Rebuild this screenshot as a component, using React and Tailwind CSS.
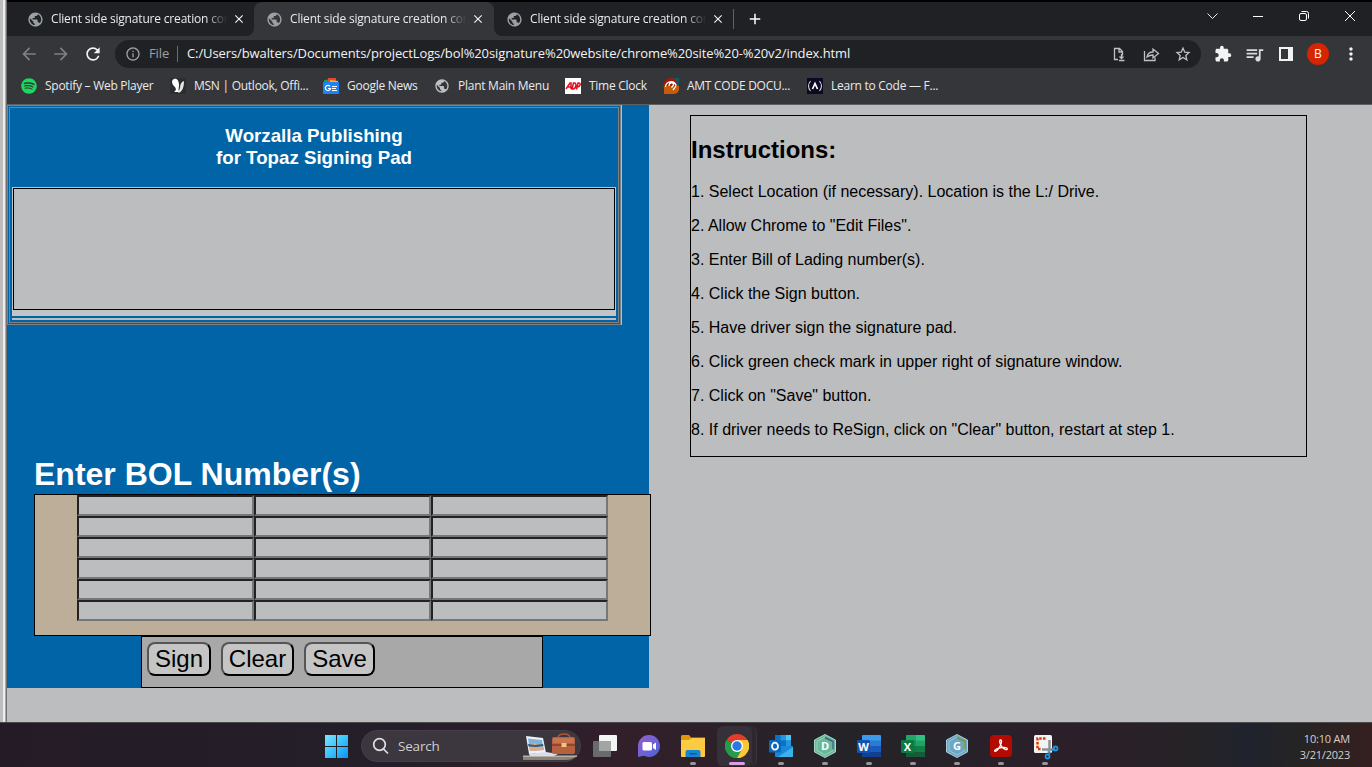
import React from "react";
import {
  MdPublic, MdArrowBack, MdArrowForward, MdRefresh, MdInfoOutline, MdExtension,
  MdQueueMusic, MdStarBorder, MdMoreVert, MdClose, MdAdd,
} from "react-icons/md";
import { FaSpotify } from "react-icons/fa";

const UI = "font-['Open_Sans',sans-serif]";

function Tab() {
  return (
    <div className="flex h-[34px] w-[239px] shrink-0 items-center pl-[12px]">
      <MdPublic size={17} color="#9aa0a6" />
      <div className="ml-[7px] w-[176px] overflow-hidden whitespace-nowrap text-[12px] tracking-[-0.18px] text-[#e8eaed] [mask-image:linear-gradient(to_right,black_88%,transparent)]">
        Client side signature creation control
      </div>
      <MdClose size={14} color="#f1f3f4" className="ml-[5px]" />
    </div>
  );
}

function WindowControls() {
  return (
    <svg width="166" height="34" viewBox="1206 2 166 34" fill="none" stroke="#e8eaed" strokeWidth="1" className="ml-auto">
      <path d="M1207.500 13.500l5 5 5-5" />
      <path d="M1253 16.500h10" stroke="#fff" />
      <rect x="1299.500" y="13.500" width="7" height="7" rx="1.500" stroke="#fff" />
      <path d="M1301.500 11.500h5a2 2 0 0 1 2 2v5" stroke="#fff" />
      <path d="M1345 11l10 10M1355 11l-10 10" stroke="#fff" />
    </svg>
  );
}

function MsnIcon() {
  return (
    <svg width="16" height="16" viewBox="0 0 16 16">
      <rect width="16" height="16" fill="#2b2d30" />
      <path d="M4 1c3-1 5 2 5 6 0 3-1 4 0 7H4c3-2 2-4 0-6S1 2 4 1z" fill="#fff" />
      <path d="M14 3c-3 1-4 4-4 7l-2 5c4-1 6-5 6-12z" fill="#e5e5e5" />
    </svg>
  );
}

function NewsIcon() {
  return (
    <svg width="16" height="16" viewBox="0 0 16 16">
      <path d="M1 2l9-1v5H1z" fill="#0f9d58" />
      <path d="M5 0h8v5H5z" fill="#ea4335" />
      <path d="M7 2l8 1v4H7z" fill="#fbbc04" />
      <rect y="4" width="16" height="12" rx="1" fill="#1a83f7" />
      <path d="M7 8.300A2.600 2.600 0 1 0 7.500 10.500H5M9 8.500h5M9 10.500h4M9 12.500h5" stroke="#fff" strokeWidth="1.200" fill="none" />
    </svg>
  );
}

function AdpIcon() {
  return (
    <svg width="16" height="16" viewBox="0 0 16 16">
      <rect width="16" height="16" fill="#fff" />
      <path d="M1 11L5 5h1v6M3 9h3M7 11l1.500-6h1C12 5 11 11 8 11zM11.500 11.500L13 5h1c2 0 1.500 4-2 4" fill="none" stroke="#e11020" strokeWidth="1.500" />
    </svg>
  );
}

function AmtIcon() {
  return (
    <svg width="16" height="16" viewBox="0 0 16 16">
      <path d="M8 0h8v9H8z" fill="#0e5a6b" />
      <path d="M0 8a8 8 0 0 1 8-8c3 0 6 2 6 6l-6 3-8 1z" fill="#9b1c0c" />
      <path d="M1 8h15v3a5 5 0 0 1-5 5H1z" fill="#c75c08" />
      <path d="M2.500 9A5.500 5.500 0 0 1 13 7c0 2-1.500 3-3 5M6 8c0-4 5-4 4.500-1L8.500 9.500" stroke="#fff" strokeWidth="1.300" fill="none" />
    </svg>
  );
}

function FccIcon() {
  return (
    <svg width="16" height="16" viewBox="0 0 16 16">
      <rect width="16" height="16" fill="#0a0a23" />
      <path d="M3.500 3Q-.5 8 3.500 13M12.500 3q4 5 0 10" stroke="#d0d0d8" fill="none" strokeWidth="1.100" />
      <path d="M5.500 11L8 5.500 10.500 11" stroke="#fff" fill="none" strokeWidth="1.700" />
    </svg>
  );
}

const bookmarks = [
  { w: "w-[149px]", icon: <FaSpotify size={16} color="#1ed760" />, text: "Spotify – Web Player", t: "tracking-[-0.26px]" },
  { w: "w-[153px]", icon: <MsnIcon />, text: "MSN | Outlook, Offi...", t: "tracking-[-0.26px]" },
  { w: "w-[111px]", icon: <NewsIcon />, text: "Google News", t: "tracking-[-0.26px]" },
  { w: "w-[131px]", icon: <MdPublic size={16} color="#bdc1c6" />, text: "Plant Main Menu", t: "tracking-[-0.26px]" },
  { w: "w-[98px]", icon: <AdpIcon />, text: "Time Clock", t: "tracking-[-0.26px]" },
  { w: "w-[144px]", icon: <AmtIcon />, text: "AMT CODE DOCU...", t: "tracking-[-0.26px]" },
  { w: "w-[140px]", icon: <FccIcon />, text: "Learn to Code — F...", t: "tracking-[-0.26px]" },
];

function Browser() {
  return (
    <header className={`${UI} h-[105px] border-b border-[#5f6063] border-t-[2px] border-t-black bg-[#35363a]`}>
      <div className="flex h-[34px]">
        <div className="w-[247px] rounded-br-lg bg-[#202124] pl-2"><Tab /></div>
        <div className="bg-[#202124]"><div className="w-[240px] rounded-t-lg bg-[#35363a]"><Tab /></div></div>
        <div className="flex flex-1 items-center rounded-bl-lg bg-[#202124]">
          <Tab />
          <div className="h-[20px] w-px bg-[#5f6368]" />
          <MdAdd size={18} color="#fff" className="ml-[12px]" />
          <WindowControls />
        </div>
      </div>
      <div className="flex h-[36px] items-center pl-[12px]">
        <MdArrowBack size={20} color="#7d8084" />
        <MdArrowForward size={20} color="#7d8084" className="ml-[12px]" />
        <MdRefresh size={20} color="#f1f3f4" className="ml-[12px]" />
        <div className="ml-[12px] flex h-[28px] w-[1086px] items-center rounded-full bg-[#202124] pl-[10px]">
          <MdInfoOutline size={16} color="#9aa0a6" />
          <span className="ml-[8px] w-[28px] text-[13px] tracking-[-0.1px] text-[#9aa0a6]">File</span>
          <div className="h-[16px] w-px bg-[#6b6e73]" />
          <span className="ml-[9px] whitespace-nowrap text-[13px] tracking-[-0.1px] text-[#f1f3f4]">
            C:/Users/bwalters/Documents/projectLogs/bol%20signature%20website/chrome%20site%20-%20v2/index.html
          </span>
          <svg width="80" height="20" viewBox="1112 44 80 20" fill="none" stroke="#bdc1c6" strokeWidth="1.300" className="ml-auto mr-[9px]">
            <path d="M1118 59.500h-3.500v-11h5l3 3v4M1119 48.500v3.500h3.500" />
            <path d="M1121.500 54v4M1119.500 56.500l2 2 2-2M1119 60.500h5.500" />
            <path d="M1144.500 51v9.500h10.500v-3" />
            <path d="M1147 57c.5-3.500 2.500-5 6-5v-3l5.500 4.500-5.500 4.500v-3c-2.500 0-4 .5-6 2z" />
            <path d="M1183 48.200l1.800 4 4.200.4-3.200 2.900 1 4.300-3.800-2.300-3.800 2.300 1-4.300-3.200-2.900 4.200-.4z" />
          </svg>
        </div>
        <MdExtension size={18} color="#f1f3f4" className="ml-[13px]" />
        <MdQueueMusic size={21} color="#dadce0" className="ml-[12px]" />
        <svg width="14" height="14" viewBox="0 0 14 14" className="ml-[14px]">
          <path d="M0 0h14v14H0zM2 2v10h7V2z" fill="#f1f3f4" fillRule="evenodd" />
        </svg>
        <div className="ml-[14px] flex size-[22px] items-center justify-center rounded-full bg-[#d62500] text-[12px] text-white">B</div>
        <MdMoreVert size={20} color="#f1f3f4" className="ml-[12px]" />
      </div>
      <div className="flex h-[28px] items-center pl-[14px]">
        {bookmarks.map((b) => (
          <div key={b.text} className={`flex shrink-0 items-center gap-2 whitespace-nowrap text-[12px] text-[#e8eaed] ${b.w} ${b.t}`}>
            {b.icon}
            <span>{b.text}</span>
          </div>
        ))}
      </div>
    </header>
  );
}

const steps = [
  "1. Select Location (if necessary). Location is the L:/ Drive.",
  '2. Allow Chrome to "Edit Files".',
  "3. Enter Bill of Lading number(s).",
  "4. Click the Sign button.",
  "5. Have driver sign the signature pad.",
  "6. Click green check mark in upper right of signature window.",
  '7. Click on "Save" button.',
  '8. If driver needs to ReSign, click on "Clear" button, restart at step 1.',
];

function Page() {
  return (
    <main className="flex h-[617px] bg-[#bcbdbf] font-['Liberation_Sans',Arial,sans-serif] text-black">
      <section className="h-[583px] w-[642px] shrink-0 bg-[#0064a6]">
        <div className="w-[615px] border-r border-[#bcbdbf]">
          <div className="h-[220px] border-[3px] border-double border-[#808080] px-[2px]">
            <h3 className="h-[79px] pt-[17px] text-center text-[18.72px] font-bold leading-[22px] text-white">
              Worzalla Publishing<br />for Topaz Signing Pad
            </h3>
            <div className="h-[129px] bg-[#c3c4c6] p-px">
              <div className="h-[122px] border border-black bg-[#bcbdbf]" />
            </div>
            <div className="mt-[2px] h-[2px] bg-[#bcbdbf]" />
          </div>
        </div>
        <h1 className="ml-[27px] mt-[131px] h-[38px] text-[32px] font-bold leading-[37px] text-white">Enter BOL Number(s)</h1>
        <div className="ml-[27px] h-[142px] w-[617px] border border-black bg-[#bdae99] pl-[42px]">
          <div className="grid w-[531px] grid-cols-3">
            {Array.from({ length: 18 }, (_, i) => (
              <input key={i} className="h-[21px] w-full border-2 border-b-[#767779] border-l-[#222] border-r-[#767779] border-t-[#222] bg-[#bcbdbf]" />
            ))}
          </div>
        </div>
        <div className="ml-[134px] flex h-[52px] w-[402px] gap-[10px] border border-black bg-[#a8a8a8] pl-[5px] pt-[5px]">
          <button className="h-[34px] w-[64px] rounded-lg border-2 border-b-black border-l-[#555] border-r-black border-t-[#555] bg-[#c5c5c5] text-[24px] leading-[30px]">Sign</button>
          <button className="h-[34px] w-[73px] rounded-lg border-2 border-b-black border-l-[#555] border-r-black border-t-[#555] bg-[#c5c5c5] text-[24px] leading-[30px]">Clear</button>
          <button className="h-[34px] w-[71px] rounded-lg border-2 border-b-black border-l-[#555] border-r-black border-t-[#555] bg-[#c5c5c5] text-[24px] leading-[30px]">Save</button>
        </div>
      </section>
      <section className="ml-[41px] mt-[10px] h-[342px] w-[617px] border border-black">
        <h2 className="mt-[20px] text-[24px] font-bold leading-[28px]">Instructions:</h2>
        <div className="mt-[19px] flex flex-col gap-4">
          {steps.map((s) => <p key={s} className="text-[16px] leading-[18px]">{s}</p>)}
        </div>
      </section>
    </main>
  );
}

function TaskItem({ children, dot = true, active = false }) {
  return (
    <div className="flex h-[44px] w-[44px] shrink-0 flex-col items-center">
      <div className={active ? "flex h-[40px] w-[40px] items-center justify-center rounded-md border-r border-[#3a353c] bg-[#363138] shadow-[inset_-4px_0_0_#2d282f]" : "flex h-[40px] w-[40px] items-center justify-center"}>
        {children}
      </div>
      {dot && <div className={active ? "-mt-[4px] h-[3px] w-[16px] rounded-full bg-[#d8a0e0]" : "-mt-[4px] h-[3px] w-[6px] rounded-full bg-[#98949a]"} />}
    </div>
  );
}

function OfficeIcon({ c, letter }) {
  return (
    <svg width="24" height="22" viewBox="0 0 24 22">
      <rect x="5" width="19" height="22" rx="1" fill={c[0]} />
      <path d="M5 5.500h19V11H5z" fill={c[1]} />
      <path d="M5 11h19v5.500H5z" fill={c[2]} />
      <path d="M5 16.500h19V21q0 1-1 1H6q-1 0-1-1z" fill={c[3]} />
      {letter === "X" && <path d="M5 1q0-1 1-1h9v16.500H5z" fill="#0b7040" opacity=".35" />}
      <rect y="5" width="13" height="13" rx="1" fill={c[4]} />
      <text x="6.500" y="15.500" textAnchor="middle" fontFamily="Open Sans" fontWeight="700" fontSize="11" fill="#fff">{letter}</text>
    </svg>
  );
}

function HexIcon({ base, light, accent, letter }) {
  return (
    <svg width="24" height="24" viewBox="0 0 24 24">
      <path d="M12 .5l10.500 5.500v12L12 23.500 1.500 18V6z" fill={base} stroke={light} />
      <path d="M12 3l8 4.500v9L12 21l-8-4.500v-9z" fill="none" stroke={light} opacity=".8" />
      <path d="M12 3.500l8 4v8" fill="none" stroke={accent} strokeWidth="1.400" />
      <text x="12" y="16" textAnchor="middle" fontFamily="Open Sans" fontWeight="700" fontSize="11" fill="#fff">{letter}</text>
    </svg>
  );
}

function ChromeIcon() {
  return (
    <svg width="24" height="24" viewBox="0 0 24 24">
      <path d="M12 12L1.600 6A12 12 0 0 1 22.400 6z" fill="#e33b2e" />
      <path d="M12 12L22.400 6A12 12 0 0 1 12 24z" fill="#fcc934" />
      <path d="M12 12L12 24A12 12 0 0 1 1.600 6z" fill="#269b4a" />
      <path d="M12 6h10.400A12 12 0 0 1 12 24l5.200-9z" fill="#fcc934" />
      <path d="M1.600 6l5.200 9A6 6 0 0 0 17.200 15L12 24A12 12 0 0 1 1.600 6z" fill="#269b4a" />
      <circle cx="12" cy="12" r="6" fill="#fff" />
      <circle cx="12" cy="12" r="4.700" fill="#2879e8" />
    </svg>
  );
}

function Taskbar() {
  return (
    <footer className={`${UI} flex h-[45px] shrink-0 border-t border-[#4b484c] bg-[linear-gradient(90deg,#241b26_0%,#241f2a_28%,#321f2a_46%,#242328_62%,#2c1f2a_78%,#262326_87%,#20232e_91%,#262423_95%,#351f20_100%)]`}>
      <svg width="24" height="24" viewBox="0 0 24 24" className="ml-[325px] mt-[12px] shrink-0">
        <defs>
          <linearGradient id="win" x1="0" y1="0" x2="24" y2="24" gradientUnits="userSpaceOnUse">
            <stop stopColor="#7be3ff" /><stop offset=".5" stopColor="#38c1fb" /><stop offset="1" stopColor="#0a8df2" />
          </linearGradient>
        </defs>
        <path d="M0 0h11v11H0zM12 0h11v11H12zM0 12h11v11H0zM12 12h11v11H12z" fill="url(#win)" />
      </svg>
      <div className="ml-[12px] mt-[7px] flex h-[32px] w-[220px] shrink-0 items-center rounded-full border border-[#453f47] bg-[#3c363e] pl-[10px]">
        <svg width="18" height="18" viewBox="0 0 18 18" fill="none" stroke="#e0dee2" strokeWidth="1.700">
          <circle cx="7.500" cy="7.500" r="5.800" /><path d="M11.500 12l4 4" strokeLinecap="round" />
        </svg>
        <span className="ml-[8px] text-[13.5px] tracking-[-0.2px] text-[#d0ced1]">Search</span>
        <svg width="54" height="28" viewBox="522 733 54 28" className="ml-auto mr-[3px]">
          <path d="M522 757h54l-3 2q-3 2-8 2h-43z" fill="#8a8478" />
          <path d="M522 756.500h54v1.500h-54z" fill="#b9b1a3" />
          <path d="M525 737l17 2 3 15-17 1z" fill="#eaf3fa" />
          <path d="M527 739.500l14 1.500 2 10-14 1z" fill="#7fb3da" />
          <path d="M528 746l6-2 9 5v2l-14 1z" fill="#dfa982" />
          <path d="M527 745l7 1 8-1 .5 2-7 1-8-.5z" fill="#315d82" />
          <path d="M528 755l17-2 12 2-4 2h-24z" fill="#d7dfed" />
          <path d="M557 739q0-4 6-4t6 4" stroke="#ab5738" strokeWidth="1.500" fill="none" />
          <rect x="551" y="738" width="23" height="17" rx="2" fill="#b5603f" />
          <path d="M551 746h23" stroke="#7e3824" strokeWidth="1.300" />
          <path d="M552 739h21v5h-21z" fill="#c6754f" />
          <rect x="560.500" y="744" width="5" height="4" fill="#f2c777" />
        </svg>
      </div>
      <div className="ml-[2px] mt-[3px] flex">
        <TaskItem dot={false}>
          <svg width="24" height="22" viewBox="0 0 24 22"><rect x="6" width="18" height="16" rx="1" fill="#f4f4f4" /><path d="M0 7q0-1 1-1h17v15q0 1-1 1H1q-1 0-1-1z" fill="#696b6c" /><path d="M6 6h12v10H6z" fill="#a3a4a5" /></svg>
        </TaskItem>
        <TaskItem dot={false}>
          <svg width="24" height="24" viewBox="0 0 24 24"><defs><linearGradient id="chat" x1="0" y1="0" x2="1" y2="1"><stop stopColor="#9a5fd0" /><stop offset="1" stopColor="#4664d8" /></linearGradient></defs><path d="M12 1a11 11 0 1 1-5 20.800L1 23V12A11 11 0 0 1 12 1z" fill="url(#chat)" /><rect x="5.500" y="8" width="9.500" height="8.500" rx="1.500" fill="#fff" /><path d="M16 10.500l3-2v7.500l-3-2z" fill="#fff" /></svg>
        </TaskItem>
        <TaskItem>
          <svg width="24" height="22" viewBox="0 0 24 22"><path d="M0 1.500Q0 0 1.500 0H8l2 2.500h14V10H0z" fill="#dc9a0b" /><path d="M0 5h8l3-2h13v18q0 1-1 1H1q-1 0-1-1z" fill="#fdcb42" /><path d="M4.500 22v-5q0-2 2-2h11q2 0 2 2v5z" fill="#1686d0" /><rect x="8" y="18" width="8" height="1.500" rx=".7" fill="#0b5c9c" /></svg>
        </TaskItem>
        <TaskItem active><ChromeIcon /></TaskItem>
        <TaskItem>
          <svg width="24" height="22" viewBox="0 0 24 22"><rect x="6" width="16" height="16" fill="#0a72c5" /><path d="M11.500 0H17v5.500h-5.500z" fill="#2496df" /><path d="M17 0h5v5.500h-5z" fill="#52c4f3" /><path d="M17 5.500h5V11h-5z" fill="#2496df" /><path d="M6 11h17l1 .5V21q0 1-1 1H7q-1 0-1-1z" fill="#1789d6" /><path d="M24 12L9 22h14q1 0 1-1z" fill="#3bb2eb" /><rect y="5" width="12" height="12.500" rx="1" fill="#0868bd" /><ellipse cx="6" cy="11.200" rx="3" ry="3.500" fill="none" stroke="#fff" strokeWidth="1.800" /></svg>
        </TaskItem>
        <TaskItem><HexIcon base="#69b899" light="#a5dbc4" accent="#38638c" letter="D" /></TaskItem>
        <TaskItem><OfficeIcon c={["#3c9be8", "#2b7ad4", "#185bbd", "#123f8f", "#1552b5"]} letter="W" /></TaskItem>
        <TaskItem><OfficeIcon c={["#2fc082", "#22a366", "#108047", "#185b37", "#0d7a41"]} letter="X" /></TaskItem>
        <TaskItem><HexIcon base="#6ba8c4" light="#a4cddd" accent="#7d932c" letter="G" /></TaskItem>
        <TaskItem>
          <svg width="22" height="22" viewBox="0 0 22 22"><rect width="22" height="22" rx="4" fill="#b30b00" /><path d="M10.500 5c2 0 .8 4.500-1.500 8-1.500 2.500-3.500 4-4.200 3.200-1-1.200 3.200-3.500 7.200-3.700 3-.2 5.500.3 5.300 1.500-.3 1.500-3.500.2-5.300-2C10 9.700 8.800 5 10.500 5z" fill="none" stroke="#fff" strokeWidth="1.300" /></svg>
        </TaskItem>
        <TaskItem>
          <svg width="26" height="26" viewBox="0 0 26 26" className="mt-[1px] translate-x-[1px]"><rect x="1" y="1" width="18" height="18" rx="1.500" fill="#f3f3f3" /><path d="M12.500 4.500H4.500v10.500h4" fill="none" stroke="#d83b01" strokeWidth="2.500" strokeDasharray="2.500 1.300" /><path d="M16.500 6v10l-1 3M9 15.500h10l3-1" fill="none" stroke="#8b9296" strokeWidth="2.500" /><circle cx="22.500" cy="14.500" r="2" fill="none" stroke="#1c93dc" strokeWidth="1.800" /><circle cx="14.500" cy="22.500" r="2" fill="none" stroke="#1c93dc" strokeWidth="1.800" /><path d="M16 20.500l1-2.500M20.500 15.500l-2 1" stroke="#1c93dc" strokeWidth="1.800" /></svg>
        </TaskItem>
      </div>
      <div className="ml-auto mr-[22px] mt-[8px] text-right text-[11px] leading-[16px] text-[#d2d0d2]">
        <div className="tracking-[-0.2px]">10:10 AM</div>
        <div className="tracking-[-0.2px]">3/21/2023</div>
      </div>
    </footer>
  );
}

export default function App() {
  return (
    <div className="flex h-[767px] w-[1372px] flex-col overflow-hidden">
      <div className="flex h-[722px]">
        <div className="flex w-[7px] shrink-0">
          <div className="w-[3px] bg-[#bdbdbd]" />
          <div className="w-[2px] bg-[#ededed]" />
          <div className="w-px bg-[#aaa]" />
          <div className="w-px bg-[#6f6f6f]" />
        </div>
        <div className="w-[1365px]">
          <Browser />
          <Page />
        </div>
      </div>
      <Taskbar />
    </div>
  );
}
